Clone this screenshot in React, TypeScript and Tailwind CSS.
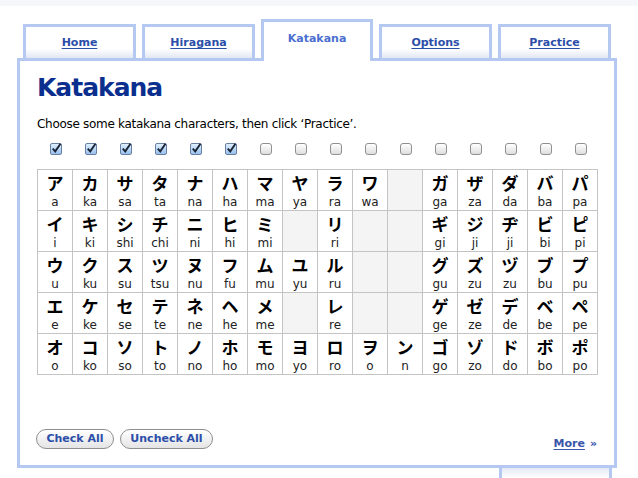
import React from "react";

type Cell = [string, string] | null;

const rows: Cell[][] = [
  [["ア","a"],["カ","ka"],["サ","sa"],["タ","ta"],["ナ","na"],["ハ","ha"],["マ","ma"],["ヤ","ya"],["ラ","ra"],["ワ","wa"],null,["ガ","ga"],["ザ","za"],["ダ","da"],["バ","ba"],["パ","pa"]],
  [["イ","i"],["キ","ki"],["シ","shi"],["チ","chi"],["ニ","ni"],["ヒ","hi"],["ミ","mi"],null,["リ","ri"],null,null,["ギ","gi"],["ジ","ji"],["ヂ","ji"],["ビ","bi"],["ピ","pi"]],
  [["ウ","u"],["ク","ku"],["ス","su"],["ツ","tsu"],["ヌ","nu"],["フ","fu"],["ム","mu"],["ユ","yu"],["ル","ru"],null,null,["グ","gu"],["ズ","zu"],["ヅ","zu"],["ブ","bu"],["プ","pu"]],
  [["エ","e"],["ケ","ke"],["セ","se"],["テ","te"],["ネ","ne"],["ヘ","he"],["メ","me"],null,["レ","re"],null,null,["ゲ","ge"],["ゼ","ze"],["デ","de"],["ベ","be"],["ペ","pe"]],
  [["オ","o"],["コ","ko"],["ソ","so"],["ト","to"],["ノ","no"],["ホ","ho"],["モ","mo"],["ヨ","yo"],["ロ","ro"],["ヲ","o"],["ン","n"],["ゴ","go"],["ゾ","zo"],["ド","do"],["ボ","bo"],["ポ","po"]],
];

const checked = [true, true, true, true, true, true, false, false, false, false, false, false, false, false, false, false];

function Checkbox({ on }: { on: boolean }) {
  if (on) {
    return (
      <span className="relative block w-[12px] h-[12px] rounded-[2px] border border-[#6a80a0] bg-gradient-to-b from-[#e0f0ff] to-[#98c0ee]">
        <svg viewBox="0 0 11 11" className="absolute left-[-1px] top-[-2px] w-[12px] h-[12px]">
          <path d="M2.5 6 L4.8 8.6 L9.6 1.6" fill="none" stroke="#1b2433" strokeWidth="1.7" />
        </svg>
      </span>
    );
  }
  return (
    <span className="block w-[12px] h-[12px] rounded-[3px] border border-[#909090] bg-gradient-to-b from-white to-[#dedede]" />
  );
}

function Tab({ label }: { label: string }) {
  return (
    <div className="w-[113px] h-[34px] border-[3px] border-b-0 border-[#b4c8f2] bg-gradient-to-b from-white from-[70%] to-[#e2e7f3] flex justify-center pt-[9px]">
      <span className="text-[11px] leading-[14px] font-bold text-[#2c4ea8] underline underline-offset-[2px]">{label}</span>
    </div>
  );
}

export default function App() {
  return (
    <div className="w-[638px] h-[478px] bg-white overflow-hidden font-['DejaVu_Sans',sans-serif]">
      <div className="h-[6px] bg-[#f6f7fa]" />
      <div className="relative z-10 flex items-end gap-[6px] ml-[23px] mt-[13px] h-[39px]">
        <Tab label="Home" />
        <Tab label="Hiragana" />
        <div className="w-[112px] h-[42px] mb-[-3px] border-[3px] border-b-0 border-[#b4c8f2] bg-white flex justify-center pt-[10px]">
          <span className="text-[11px] leading-[14px] font-bold text-[#4b6fd0]">Katakana</span>
        </div>
        <Tab label="Options" />
        <Tab label="Practice" />
      </div>
      <div className="ml-[17px] w-[600px] h-[410px] border-[3px] border-[#b4c8f2] px-[17px] pt-[12px] pb-[16px] flex flex-col">
        <h1 className="text-[25px] leading-[30px] font-bold tracking-[-1px] text-[#0b2f8e]">Katakana</h1>
        <p className="mt-[14px] text-[12px] leading-[15px] tracking-[-0.3px] text-black">
          Choose some katakana characters, then click ‘Practice’.
        </p>
        <div className="mt-[11px] ml-[1px] grid grid-cols-[repeat(16,35px)] h-[12px]">
          {checked.map((c, i) => (
            <div key={i} className="flex justify-center">
              <Checkbox on={c} />
            </div>
          ))}
        </div>
        <div className="mt-[14px] w-[561px] border-l border-t border-[#c4c4c4] grid grid-cols-[repeat(16,35px)]">
          {rows.flat().map((cell, i) =>
            cell ? (
              <div key={i} className="h-[41px] border-r border-b border-[#c4c4c4] flex flex-col items-center">
                <span className="block font-['Noto_Sans_CJK_JP',sans-serif] font-bold text-[17px] leading-[25px] text-black">{cell[0]}</span>
                <span className="block text-[12px] leading-[14px] text-[#222]">{cell[1]}</span>
              </div>
            ) : (
              <div key={i} className="h-[41px] border-r border-b border-[#c4c4c4] bg-[#f4f4f4]" />
            )
          )}
        </div>
        <div className="mt-auto flex items-end justify-between">
          <div className="flex gap-[6px] ml-[-1px]">
            <button className="h-[20px] w-[78px] rounded-full border border-[#8f8f8f] bg-gradient-to-b from-white to-[#e4e4e4] text-[11px] leading-[14px] font-bold text-[#2c4ea8]">
              Check All
            </button>
            <button className="h-[20px] w-[93px] rounded-full border border-[#8f8f8f] bg-gradient-to-b from-white to-[#e4e4e4] text-[11px] leading-[14px] font-bold text-[#2c4ea8]">
              Uncheck All
            </button>
          </div>
          <div className="mb-[-2px] text-[11px] leading-[14px] font-bold text-[#3a54aa]">
            <span className="underline underline-offset-[2px]">More</span>
            <span className="ml-[5px] text-[#2c4ea8]">»</span>
          </div>
        </div>
      </div>
      <div className="ml-[499px] w-[113px] h-[10px] border-x-[3px] border-[#b4c8f2] bg-gradient-to-b from-[#e4e9f5] to-white" />
    </div>
  );
}
